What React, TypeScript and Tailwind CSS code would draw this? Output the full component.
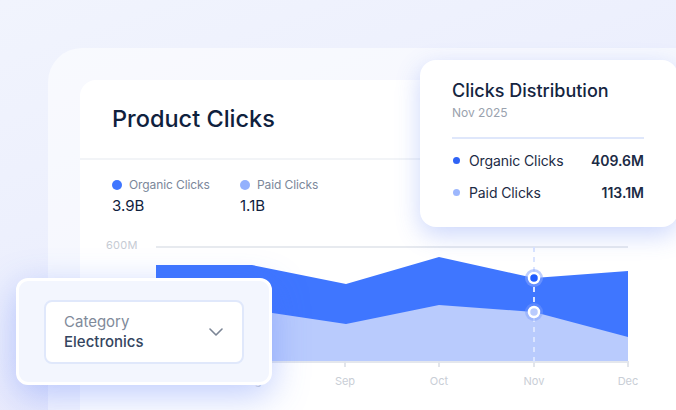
const months = [
  { label: "Jul", x: 76 },
  { label: "Aug", x: 171 },
  { label: "Sep", x: 265 },
  { label: "Oct", x: 359 },
  { label: "Nov", x: 454 },
  { label: "Dec", x: 548 },
];

export default function App() {
  return (
    <div className="relative h-[410px] w-[676px] overflow-hidden bg-[linear-gradient(160deg,#f1f4fd_0%,#eceffd_45%,#e4e3fb_100%)] font-['Inter',sans-serif]">
      <div className="pl-12 pt-12">
        <div className="h-[400px] w-[700px] rounded-tl-[34px] bg-white/55 pl-8 pt-8">
          <ProductClicksCard />
        </div>
      </div>
      <DistributionPopup />
      <CategoryPopup />
    </div>
  );
}

function ProductClicksCard() {
  return (
    <div className="h-[360px] w-[640px] rounded-tl-2xl bg-white">
      <div className="flex h-[80px] items-center border-b-2 border-[#f2f4f7] pl-8">
        <h1 className="text-[23.5px] font-medium text-[#0f213d]">Product Clicks</h1>
      </div>

      <div className="flex pl-8 pt-[17px]">
        <LegendItem color="bg-[#3f76ff]" label="Organic Clicks" value="3.9B" width="w-[128px]" />
        <LegendItem color="bg-[#94b1fd]" label="Paid Clicks" value="1.1B" width="w-[120px]" />
      </div>

      <svg width="596" height="170" viewBox="0 0 596 170" className="mt-4 block">
        <text x="26" y="18" fontSize="11" fill="#c6cbd4" letterSpacing="0.3">
          600M
        </text>
        <line x1="76" y1="16" x2="548" y2="16" stroke="#e7eaef" strokeWidth="2" />

        <path d="M76 34 L172 34 L266 53 L359 26 L454 47 L548 40 L548 130 L76 130 Z" fill="#3f76ff" />
        <path d="M76 72 L172 79 L266 93 L359 74 L454 81 L548 106 L548 130 L76 130 Z" fill="#b9cbfd" />

        <line x1="76" y1="131" x2="548" y2="131" stroke="#e4e7ed" strokeWidth="2" />
        {months.map((m) => (
          <g key={m.label}>
            <line x1={m.x} y1="130" x2={m.x} y2="136" stroke="#e2e5eb" strokeWidth="2" />
            <text x={m.x} y="154" fontSize="11" fill="#c9ced6" textAnchor="middle">
              {m.label}
            </text>
          </g>
        ))}

        <line x1="454" y1="16" x2="454" y2="136" stroke="#dbe5ff" strokeWidth="2" strokeDasharray="5 5" />
        <circle cx="454" cy="47" r="9" fill="#86a6ff" opacity="0.55" />
        <circle cx="454" cy="47" r="5" fill="#1f5cff" stroke="#fff" strokeWidth="2.5" />
        <circle cx="454" cy="81" r="9" fill="#7f9ffd" opacity="0.45" />
        <circle cx="454" cy="81" r="5" fill="#b9cbfd" stroke="#fff" strokeWidth="2.5" />
      </svg>
    </div>
  );
}

function LegendItem({
  color,
  label,
  value,
  width,
}: {
  color: string;
  label: string;
  value: string;
  width: string;
}) {
  return (
    <div className={width}>
      <div className="flex h-4 items-center gap-[7px]">
        <span className={`h-2.5 w-2.5 rounded-full ${color}`} />
        <span className="text-[12px] tracking-[-0.1px] text-[#7b879a]">{label}</span>
      </div>
      <p className="mt-1 text-[15px] leading-[18px] text-[#0f213d]">{value}</p>
    </div>
  );
}

function DistributionPopup() {
  return (
    <div className="absolute left-[420px] top-[60px] h-[167px] w-[258px] rounded-2xl bg-white pl-8 pt-[19px] shadow-[0_8px_24px_rgba(72,110,245,0.28)]">
      <h2 className="text-[18px] font-medium leading-6 text-[#15253f]">Clicks Distribution</h2>
      <p className="mt-[2px] text-[12px] leading-4 text-[#9aa2ae]">Nov 2025</p>
      <div className="mt-4 h-0.5 w-[192px] bg-[#dfe7fb]" />
      <div className="mt-[11px] flex w-[192px] flex-col gap-3">
        <DistRow color="bg-[#2f63f5]" label="Organic Clicks" value="409.6M" />
        <DistRow color="bg-[#9db7fd]" label="Paid Clicks" value="113.1M" />
      </div>
    </div>
  );
}

function DistRow({ color, label, value }: { color: string; label: string; value: string }) {
  return (
    <div className="flex h-5 items-center justify-between">
      <div className="flex items-center gap-[9px]">
        <span className={`ml-px h-[7px] w-[7px] rounded-full ${color}`} />
        <span className="text-[14px] tracking-[-0.1px] text-[#1c2b45]">{label}</span>
      </div>
      <span className="text-[14px] font-semibold text-[#1c2b45]">{value}</span>
    </div>
  );
}

function CategoryPopup() {
  return (
    <div className="absolute left-4 top-[278px] h-[107px] w-[256px] rounded-xl border-[3px] border-white bg-[#f3f6fe] pl-[25px] pt-[19px] shadow-[0_10px_36px_rgba(70,110,250,0.35)]">
      <div className="flex h-16 w-[200px] items-center justify-between rounded-lg border-2 border-[#e0e8fb] bg-white pl-[18px] pr-[19px]">
        <div>
          <p className="text-[15px] leading-5 text-[#7f8a9a]">Category</p>
          <p className="text-[15px] font-medium leading-5 text-[#344560]">Electronics</p>
        </div>
        <svg width="14" height="8" viewBox="0 0 14 8" fill="none">
          <path d="M1 1 L7 7 L13 1" stroke="#7b8595" strokeWidth="1.6" strokeLinecap="round" strokeLinejoin="round" />
        </svg>
      </div>
    </div>
  );
}
